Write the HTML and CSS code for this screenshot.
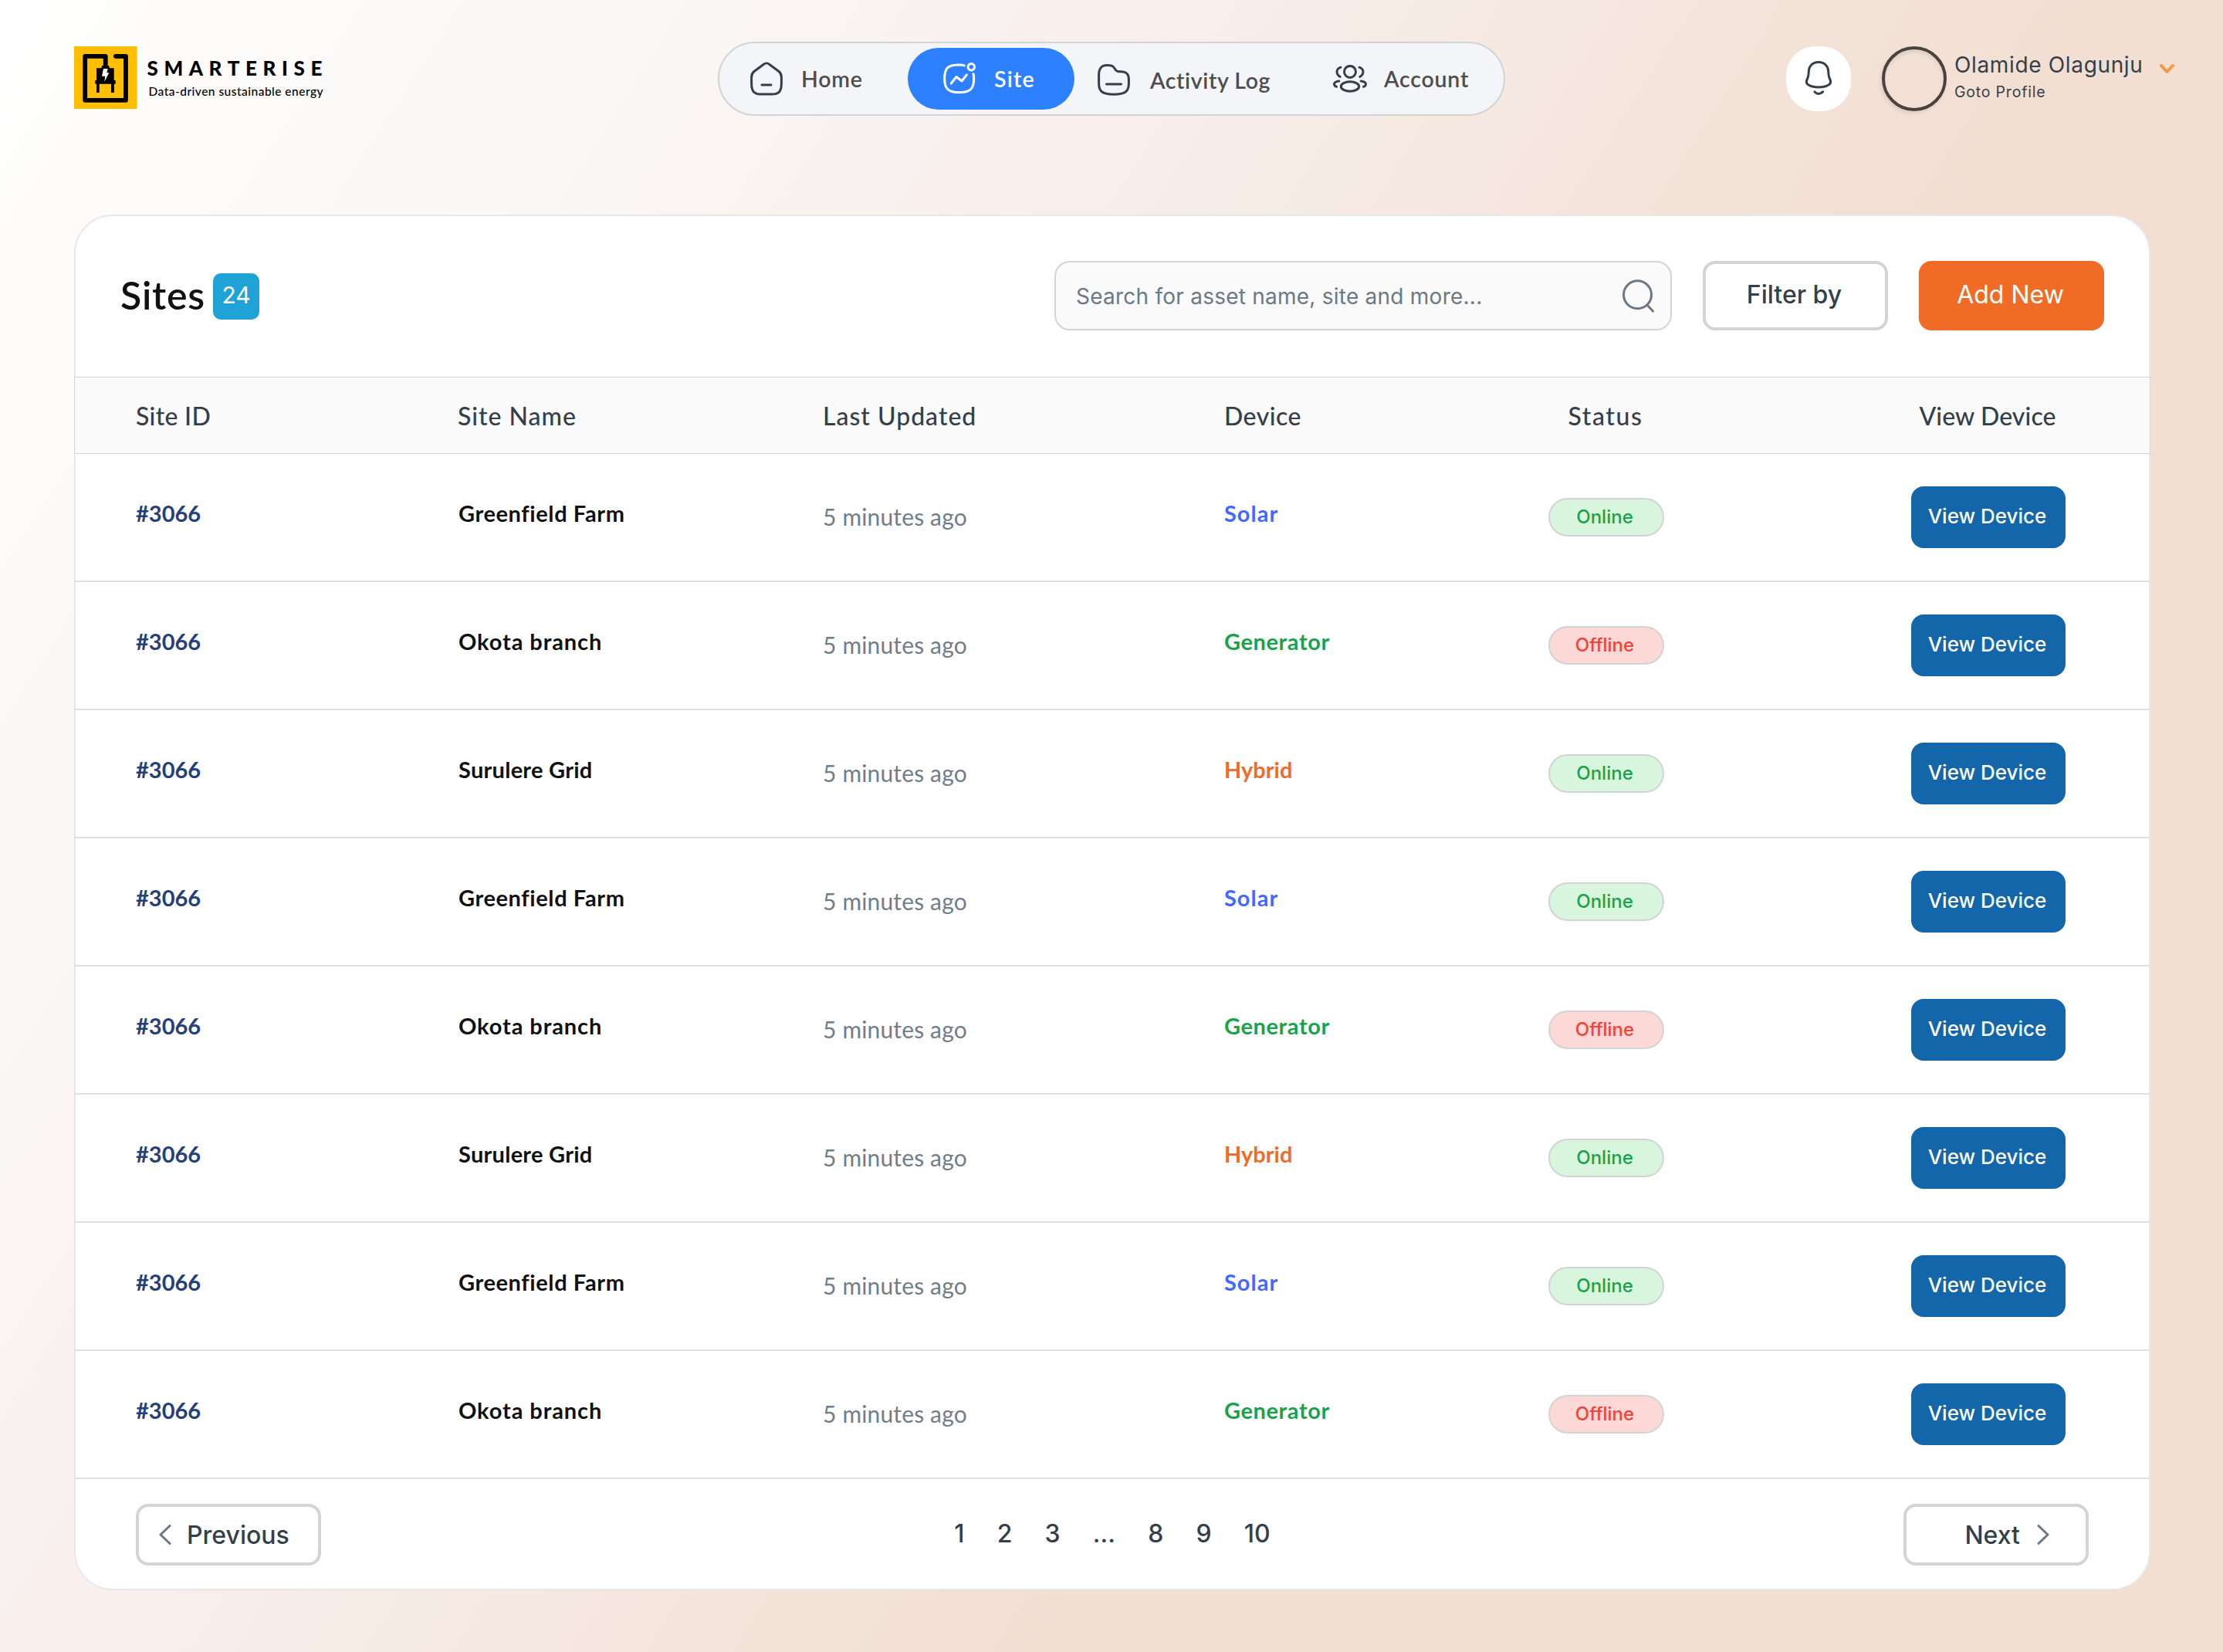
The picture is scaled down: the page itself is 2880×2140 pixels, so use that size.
FILE: index.html
```html
<!DOCTYPE html>
<html lang="en">
<head>
<meta charset="utf-8">
<title>Smarterise – Sites</title>
<link rel="stylesheet" href="styles.css">
</head>
<body>
<header class="topbar">
  <div class="brand">
    <svg class="brand-mark" viewBox="0 0 81.5 81.5"><rect width="81.5" height="81.5" fill="#ffbf00"/><path d="M40.7 30V12.8H14.2V69.8H67V12.8H54" fill="none" stroke="#000" stroke-width="5.8" stroke-linejoin="round"/><path d="M50.5 12.8l4-2.9h3v5.8h-3zM36.3 25h8.7l1 3.3h5.7V44h2v4.7h-1.8V60H48V48.7H32.7V60H29V48.7h-1.7V44H29V28.3h6.3z"/><path d="M38 29h5.7l-1.4 5.3h3l-6 11.4 1-7H36z" fill="#fff"/></svg>
    <div class="brand-text"><span class="brand-name">SMARTERISE</span><span class="brand-tag">Data-driven sustainable energy</span></div>
  </div>
  <nav class="nav">
    <a class="nav-item nav-home"><svg width="42" height="44" viewBox="0 0 42 44"><path d="M17.5 3.2C19.5 1.5 22.5 1.5 24.5 3.2L37 12.5C39.5 14.5 40.4 17 40.4 20V28C40.4 38.5 37 42 28 42H14C5 42 1.6 38.5 1.6 28V20C1.6 17 2.5 14.5 5 12.5ZM15 30H27"/></svg><span>Home</span></a>
    <a class="nav-item nav-site"><svg width="42" height="42" viewBox="0 0 42 42"><path d="M27.3 3.9C25.5 3.1 23 2.9 20.7 2.9C6 2.9 1.7 7 1.7 21C1.7 34.5 7 38.7 20.7 38.7C34.5 38.7 39.7 34.5 39.7 21C39.7 18.5 39.5 16.5 39 14.7M10.3 27L17 18.5L24 24L30.3 16"/><circle cx="36.3" cy="5.7" r="4.2"/></svg><span>Site</span></a>
    <a class="nav-item nav-activity"><svg width="42" height="41" viewBox="0 0 42 41"><path d="M1.6 14C1.6 5 5.5 1.6 12.5 1.6C18 1.6 20 2.5 22.3 6C24 9 25 9.7 28 9.7H30C37.5 9.7 40.4 13 40.4 20V25C40.4 35.5 36 39.2 21 39.2C6 39.2 1.6 35.5 1.6 25ZM11.5 26H30.5"/></svg><span>Activity Log</span></a>
    <a class="nav-item nav-account"><svg width="44" height="36" viewBox="0 0 44 36"><circle cx="22" cy="8.9" r="7.5"/><ellipse cx="22" cy="28" rx="11.7" ry="6.2"/><path d="M10 3.2C6.5 4.5 5 6.3 5 9C5 11.7 6.3 13.8 9.3 15.5M34 3.2C37.5 4.5 39 6.3 39 9C39 11.7 37.7 13.8 34.7 15.5M7.8 21C3.5 21.6 1.5 23 1.5 25C1.5 26.6 2.5 27.7 4.6 28.4M36.2 21C40.5 21.6 42.5 23 42.5 25C42.5 26.6 41.5 27.7 39.4 28.4"/></svg><span>Account</span></a>
  </nav>
  <div class="user">
    <button class="bell"><svg width="34" height="45" viewBox="0 0 34 45"><path d="M17 1.5C9 1.5 4.6 7 4.3 13C4.2 18 4 20 2.5 23C.5 27 1.2 29.5 4 31C8 33.4 12 34 17 34C22 34 26 33.4 30 31C32.8 29.5 33.5 27 31.5 23C30 20 29.8 18 29.7 13C29.4 7 25 1.5 17 1.5ZM12 39.9C14.5 43.2 19.5 43.2 22.6 39.9"/></svg></button>
    <div class="avatar"></div>
    <div class="user-text"><span class="user-name">Olamide Olagunju</span><span class="user-link">Goto Profile</span></div>
    <svg class="caret" width="19" height="12" viewBox="0 0 19 12"><path d="M2 2L9.5 9.8L17 2"/></svg>
  </div>
</header>
<main class="card">
  <div class="toolbar">
    <h1 class="title">Sites</h1><span class="count">24</span>
    <div class="search"><span>Search for asset name, site and more...</span><svg width="42" height="43" viewBox="0 0 42 43"><circle cx="19.5" cy="19.8" r="18"/><path d="M32 33L39.5 41.2"/></svg></div>
    <button class="btn filter"><span>Filter by</span></button>
    <button class="btn add"><span>Add New</span></button>
  </div>
  <div class="table">
    <div class="row head"><span class="h-id">Site ID</span><span class="h-name">Site Name</span><span class="h-time">Last Updated</span><span class="h-device">Device</span><span class="h-status">Status</span><span class="h-view">View Device</span></div>
    <div class="row"><span class="id">#3066</span><span class="name farm">Greenfield Farm</span><span class="time">5 minutes ago</span><span class="device solar">Solar</span><span class="pill online">Online</span><button class="view">View Device</button></div>
    <div class="row"><span class="id">#3066</span><span class="name branch">Okota branch</span><span class="time">5 minutes ago</span><span class="device generator">Generator</span><span class="pill offline">Offline</span><button class="view">View Device</button></div>
    <div class="row"><span class="id">#3066</span><span class="name grid">Surulere Grid</span><span class="time">5 minutes ago</span><span class="device hybrid">Hybrid</span><span class="pill online">Online</span><button class="view">View Device</button></div>
    <div class="row"><span class="id">#3066</span><span class="name farm">Greenfield Farm</span><span class="time">5 minutes ago</span><span class="device solar">Solar</span><span class="pill online">Online</span><button class="view">View Device</button></div>
    <div class="row"><span class="id">#3066</span><span class="name branch">Okota branch</span><span class="time">5 minutes ago</span><span class="device generator">Generator</span><span class="pill offline">Offline</span><button class="view">View Device</button></div>
    <div class="row"><span class="id">#3066</span><span class="name grid">Surulere Grid</span><span class="time">5 minutes ago</span><span class="device hybrid">Hybrid</span><span class="pill online">Online</span><button class="view">View Device</button></div>
    <div class="row"><span class="id">#3066</span><span class="name farm">Greenfield Farm</span><span class="time">5 minutes ago</span><span class="device solar">Solar</span><span class="pill online">Online</span><button class="view">View Device</button></div>
    <div class="row"><span class="id">#3066</span><span class="name branch">Okota branch</span><span class="time">5 minutes ago</span><span class="device generator">Generator</span><span class="pill offline">Offline</span><button class="view">View Device</button></div>
  </div>
  <div class="pager">
    <button class="page-btn prev"><svg width="16" height="26" viewBox="0 0 16 26"><path d="M14 1.5L2 13L14 24.5"/></svg><span>Previous</span></button>
    <div class="pages"><span>1</span><span>2</span><span>3</span><span class="dots">...</span><span>8</span><span>9</span><span>10</span></div>
    <button class="page-btn next"><span>Next</span><svg width="16" height="26" viewBox="0 0 16 26"><path d="M2 1.5L14 13L2 24.5"/></svg></button>
  </div>
</main>
</body>
</html>
```
FILE: styles.css
```css
* { box-sizing: border-box; }
body {
  margin: 0;
  height: 2140px;
  overflow: hidden;
  font-family: Lato, "Open Sans", sans-serif;
  color: #343f4a;
  background: linear-gradient(122.5deg, #fff 0%, #fdfcfb 6%, #faf6f3 23%, #f9efed 34%, #f5e8e0 49%, #f4e3d9 55%, #f2dfd2 64%, #f2dfd2 100%);
}
button { font: inherit; color: inherit; margin: 0; padding: 0; border: 0; background: none; }
svg { display: block; flex: none; fill: none; stroke: currentColor; stroke-width: 3; stroke-linecap: round; stroke-linejoin: round; }

/* Top bar */
.topbar { display: grid; grid-template-columns: 834px 1020px 1fr; align-items: center; height: 204px; padding: 0 63px 0 96px; }
.brand { display: flex; align-items: center; gap: 13px; margin-top: -3px; }
.brand-mark { width: 81.5px; height: 81.5px; stroke: none; fill: #000; }
.brand-text { display: flex; flex-direction: column; color: #000; white-space: nowrap; }
.brand-name { font-size: 26px; line-height: 30px; font-weight: 900; letter-spacing: 7.6px; }
.brand-tag { font-size: 15.5px; line-height: 22px; font-weight: 500; letter-spacing: .48px; padding: 4px 0 0 2px; }

.nav { display: flex; align-items: center; height: 96px; padding-left: 40px; border: 2px solid #d3d3d3; border-radius: 48px; background: #f3f5f8; }
.nav-item { display: flex; align-items: center; gap: 24px; font-size: 28.5px; line-height: 34px; font-weight: 600; letter-spacing: .8px; white-space: nowrap; }
.nav-item span { color: #4d4d4f; }
.nav-home { width: 204px; }
.nav-site { width: 216px; height: 80px; padding-left: 46px; border-radius: 40px; background: #2d80ff; color: #fff; letter-spacing: 1.2px; }
.nav-site span { color: #fff; }
.nav-activity { width: 305px; margin-left: 30px; padding-top: 3px; gap: 26px; letter-spacing: .6px; }
.nav-account { gap: 22px; }

.user { display: flex; align-items: center; justify-content: flex-end; }
.bell { width: 84px; height: 84px; padding-bottom: 2px; display: flex; align-items: center; justify-content: center; border-radius: 38px; background: #fff; }
.avatar { width: 84px; height: 84px; margin-left: 40px; border: 4px solid #48433f; border-radius: 50%; box-shadow: -2px 3px 4px rgba(72, 67, 63, .12), inset 0 4px 4px rgba(72, 67, 63, .1); }
.user-text { display: flex; flex-direction: column; margin-left: 10px; width: 266px; font-family: Inter, sans-serif; white-space: nowrap; }
.user-name { font-size: 28px; line-height: 36px; letter-spacing: .65px; margin-top: -4px; }
.user-link { font-size: 19.5px; line-height: 30px; letter-spacing: .8px; padding-top: 2px; }
.caret { color: #f2994a; stroke-width: 4; margin-bottom: 26px; }

/* Sites card */
.card { display: flex; flex-direction: column; width: 2690px; height: 1782px; margin: 74px 0 0 96px; border: 2px solid #e7e8e8; border-radius: 50px; background: #fff; }
.toolbar { display: flex; align-items: center; height: 208px; padding: 0 58px 2px 58px; font-family: Inter, sans-serif; }
.title { margin: -2px 0 0; font: 600 50px/60px Lato, sans-serif; letter-spacing: .8px; color: #111; width: 120px; }
.count { width: 60px; height: 60px; margin-top: 2px; border-radius: 10px; background: #1fa2d6; color: #fff; font-size: 30px; line-height: 57px; text-align: center; }
.search { display: flex; align-items: center; justify-content: space-between; width: 800px; height: 90px; margin-left: auto; padding: 0 20px 0 26px; border: 2px solid #d4d4d4; border-radius: 20px; background: #fafafa; color: #6c7885; font-size: 28px; letter-spacing: .24px; }
.search span { padding-top: 1px; }
.btn { width: 240px; height: 90px; margin-left: 40px; border-radius: 16px; font-size: 32px; text-align: center; padding: 0 3px 4px 0; }
.filter { border: 4px solid #d4d4d4; font-weight: 500; }
.add { background: #f06c26; color: #fff; }

/* Table */
.table { margin: 0 -2px; }
.row { display: grid; grid-template-columns: 417px 473px 520px 420px 470px 200px; align-items: center; height: 166px; padding-left: 80px; border-bottom: 2px solid #e0e0e0; font-size: 29px; white-space: nowrap; }
.head { height: 100px; border: 1px solid #d3d3d3; padding: 0 0 0 78px; background: #fafafa; font-size: 32px; font-weight: 500; }
.h-id { letter-spacing: .3px; padding-left: 1px; }
.h-name, .h-time { letter-spacing: 1px; padding-left: 1px; }
.h-device { letter-spacing: .5px; padding-left: 1px; }
.h-status { width: 150px; text-align: center; letter-spacing: 1.6px; }
.h-view { text-align: center; letter-spacing: .1px; }
.id, .name, .device { font-weight: 700; padding-bottom: 12px; }
.id { color: #24407a; }
.name { color: #111; padding-left: 1px; }
.farm { letter-spacing: .6px; }
.branch { letter-spacing: .9px; }
.grid { letter-spacing: .25px; }
.time { color: #717d8a; font-size: 30px; letter-spacing: .15px; padding-bottom: 2px; }
.solar { color: #4169ff; letter-spacing: 1px; }
.generator { color: #18a34b; letter-spacing: .6px; }
.hybrid { color: #f06c26; }
.pill { width: 150px; height: 50px; padding-right: 4px; border: 2px solid #d3d3d3; border-radius: 25px; font: 500 24px/46px Inter, sans-serif; text-align: center; }
.online { background: #d8f5de; color: #18a34b; }
.offline { background: #fcd8d7; color: #f04438; }
.view { width: 200px; height: 80px; padding: 0 3px 3px 0; border-radius: 16px; background: #1366aa; color: #fff; font: 500 26px Inter, sans-serif; }

/* Pagination */
.pager { display: flex; align-items: flex-start; justify-content: space-between; padding: 32px 78px 0; font: 500 32px/40px Inter, sans-serif; }
.page-btn { display: flex; align-items: center; width: 240px; height: 80px; border: 4px solid #d4d4d4; border-radius: 16px; }
.page-btn svg { color: #6c7885; }
.page-btn span { padding-top: 1px; }
.prev { padding-left: 26px; gap: 20px; }
.next { justify-content: flex-end; padding-right: 47px; gap: 22px; }
.pages { display: flex; gap: 42.2px; padding-top: 19px; }
```
